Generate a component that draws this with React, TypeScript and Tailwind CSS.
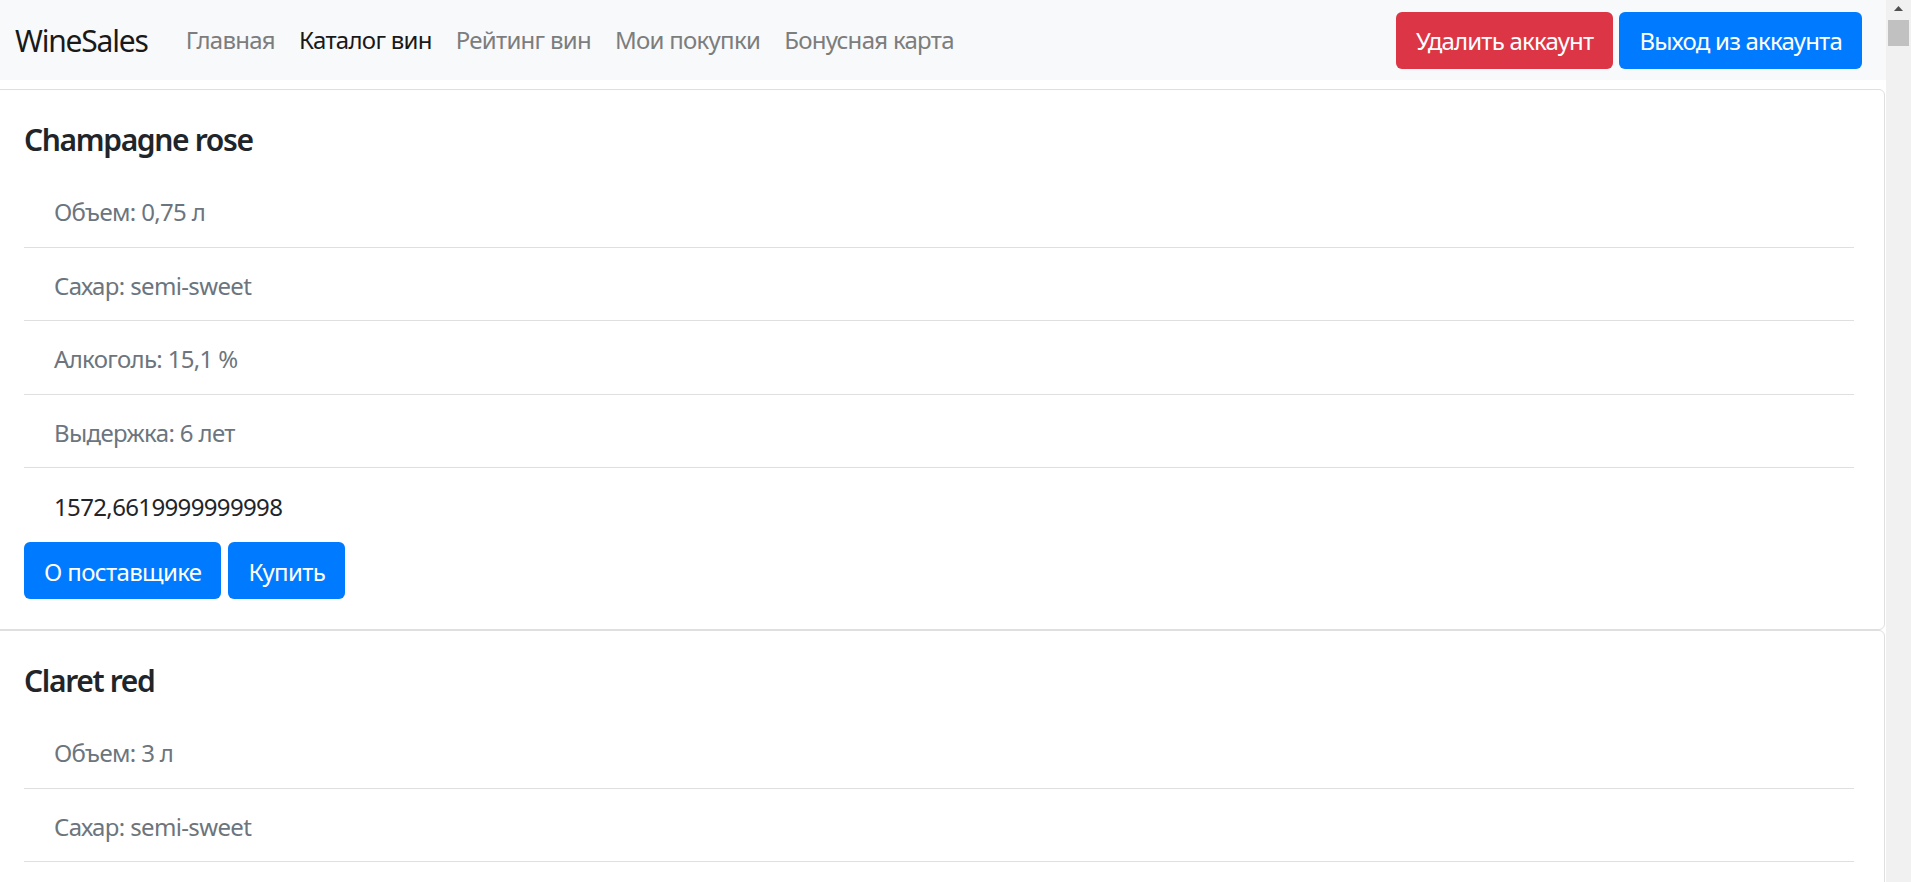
import React from "react";

// ── Data ──────────────────────────────────────────────────────────────────────
type Wine = {
    name: string;
    volume: string;
    sugar: string;
    alcohol: string;
    aging: string;
    price: string;
};

const wines: Wine[] = [
    { name: "Champagne rose", volume: "0,75", sugar: "semi-sweet", alcohol: "15,1", aging: "6", price: "1572,6619999999998" },
    { name: "Claret red", volume: "3", sugar: "semi-sweet", alcohol: "12,4", aging: "3", price: "980,5" },
];

const links = [
    { label: "Главная", active: false },
    { label: "Каталог вин", active: true },
    { label: "Рейтинг вин", active: false },
    { label: "Мои покупки", active: false },
    { label: "Бонусная карта", active: false },
];

// ── Wine card ─────────────────────────────────────────────────────────────────
function WineCard({ wine }: { wine: Wine }) {
    const rows = [
        `Объем: ${wine.volume} л`,
        `Сахар: ${wine.sugar}`,
        `Алкоголь: ${wine.alcohol} %`,
        `Выдержка: ${wine.aging} лет`,
    ];

    return (
        <div className="-ml-[7px] mr-[1px] border border-[#dfdfdf] rounded-[6px] bg-white px-[30px] pt-[32px] pb-[30px] shrink-0">
            <h5 className="text-[30px] leading-[36px] font-semibold tracking-[-0.045em] text-[#212529] mb-[16px]">{wine.name}</h5>
            <ul className="flex flex-col">
                {rows.map((r) => (
                    <li key={r} className="pl-[30px] pt-[20px] pb-[16.5px] text-[24px] leading-[36px] text-[#6c757d] border-b border-[#dfdfdf]">
                        {r}
                    </li>
                ))}
                <li className="pl-[30px] pt-[21px] pb-[17px] text-[24px] leading-[36px] text-[#212529]">{wine.price}</li>
            </ul>
            <div className="flex gap-[7px]">
                <button className="h-[57px] px-[20px] pt-[2px] rounded-[6px] bg-[#007bff] text-white text-[24px] leading-[36px]">О поставщике</button>
                <button className="h-[57px] px-[20px] pt-[2px] rounded-[6px] bg-[#007bff] text-white text-[24px] leading-[36px]">Купить</button>
            </div>
        </div>
    );
}

// ── Fake browser scrollbar ────────────────────────────────────────────────────
function Scrollbar() {
    return (
        <div className="w-[25px] shrink-0 bg-[#f1f1f1] flex flex-col items-center">
            <svg width="25" height="20" viewBox="0 0 25 20" className="shrink-0">
                <path d="M8 11 L12.5 6 L17 11 Z" fill="#505050" />
            </svg>
            <div className="w-[21px] h-[26px] bg-[#c1c1c1]" />
        </div>
    );
}

export default function App() {
    return (
        <div className="flex h-screen w-full overflow-hidden bg-white font-['Noto_Sans','Open_Sans',sans-serif] tracking-[-0.04em]">
            <div className="flex-1 min-w-0 flex flex-col overflow-hidden">
                {/* Navbar */}
                <nav className="h-[80px] shrink-0 bg-[#f8f9fa] flex items-center pl-[15px] pr-[24px]">
                    <span className="text-[30px] leading-[45px] tracking-[-0.04em] text-[#191919] mr-[26px]">WineSales</span>
                    <div className="flex items-center flex-1 tracking-[-0.045em]">
                        {links.map((l) => (
                            <a
                                key={l.label}
                                className={
                                    l.active
                                        ? "px-[12px] text-[24px] leading-[36px] text-[#191919]"
                                        : "px-[12px] text-[24px] leading-[36px] text-[#7c7d7d]"
                                }
                            >
                                {l.label}
                            </a>
                        ))}
                    </div>
                    <div className="flex items-center gap-[6px] tracking-[-0.05em]">
                        <button className="h-[57px] px-[20px] pt-[1px] rounded-[6px] bg-[#dc3545] text-white text-[24px] leading-[36px]">Удалить аккаунт</button>
                        <button className="h-[57px] px-[20px] pt-[1px] rounded-[6px] bg-[#007bff] text-white text-[24px] leading-[36px]">Выход из аккаунта</button>
                    </div>
                </nav>

                {/* Catalog */}
                <div className="mt-[9px] flex flex-col">
                    {wines.map((w) => (
                        <WineCard key={w.name} wine={w} />
                    ))}
                </div>
            </div>
            <Scrollbar />
        </div>
    );
}
